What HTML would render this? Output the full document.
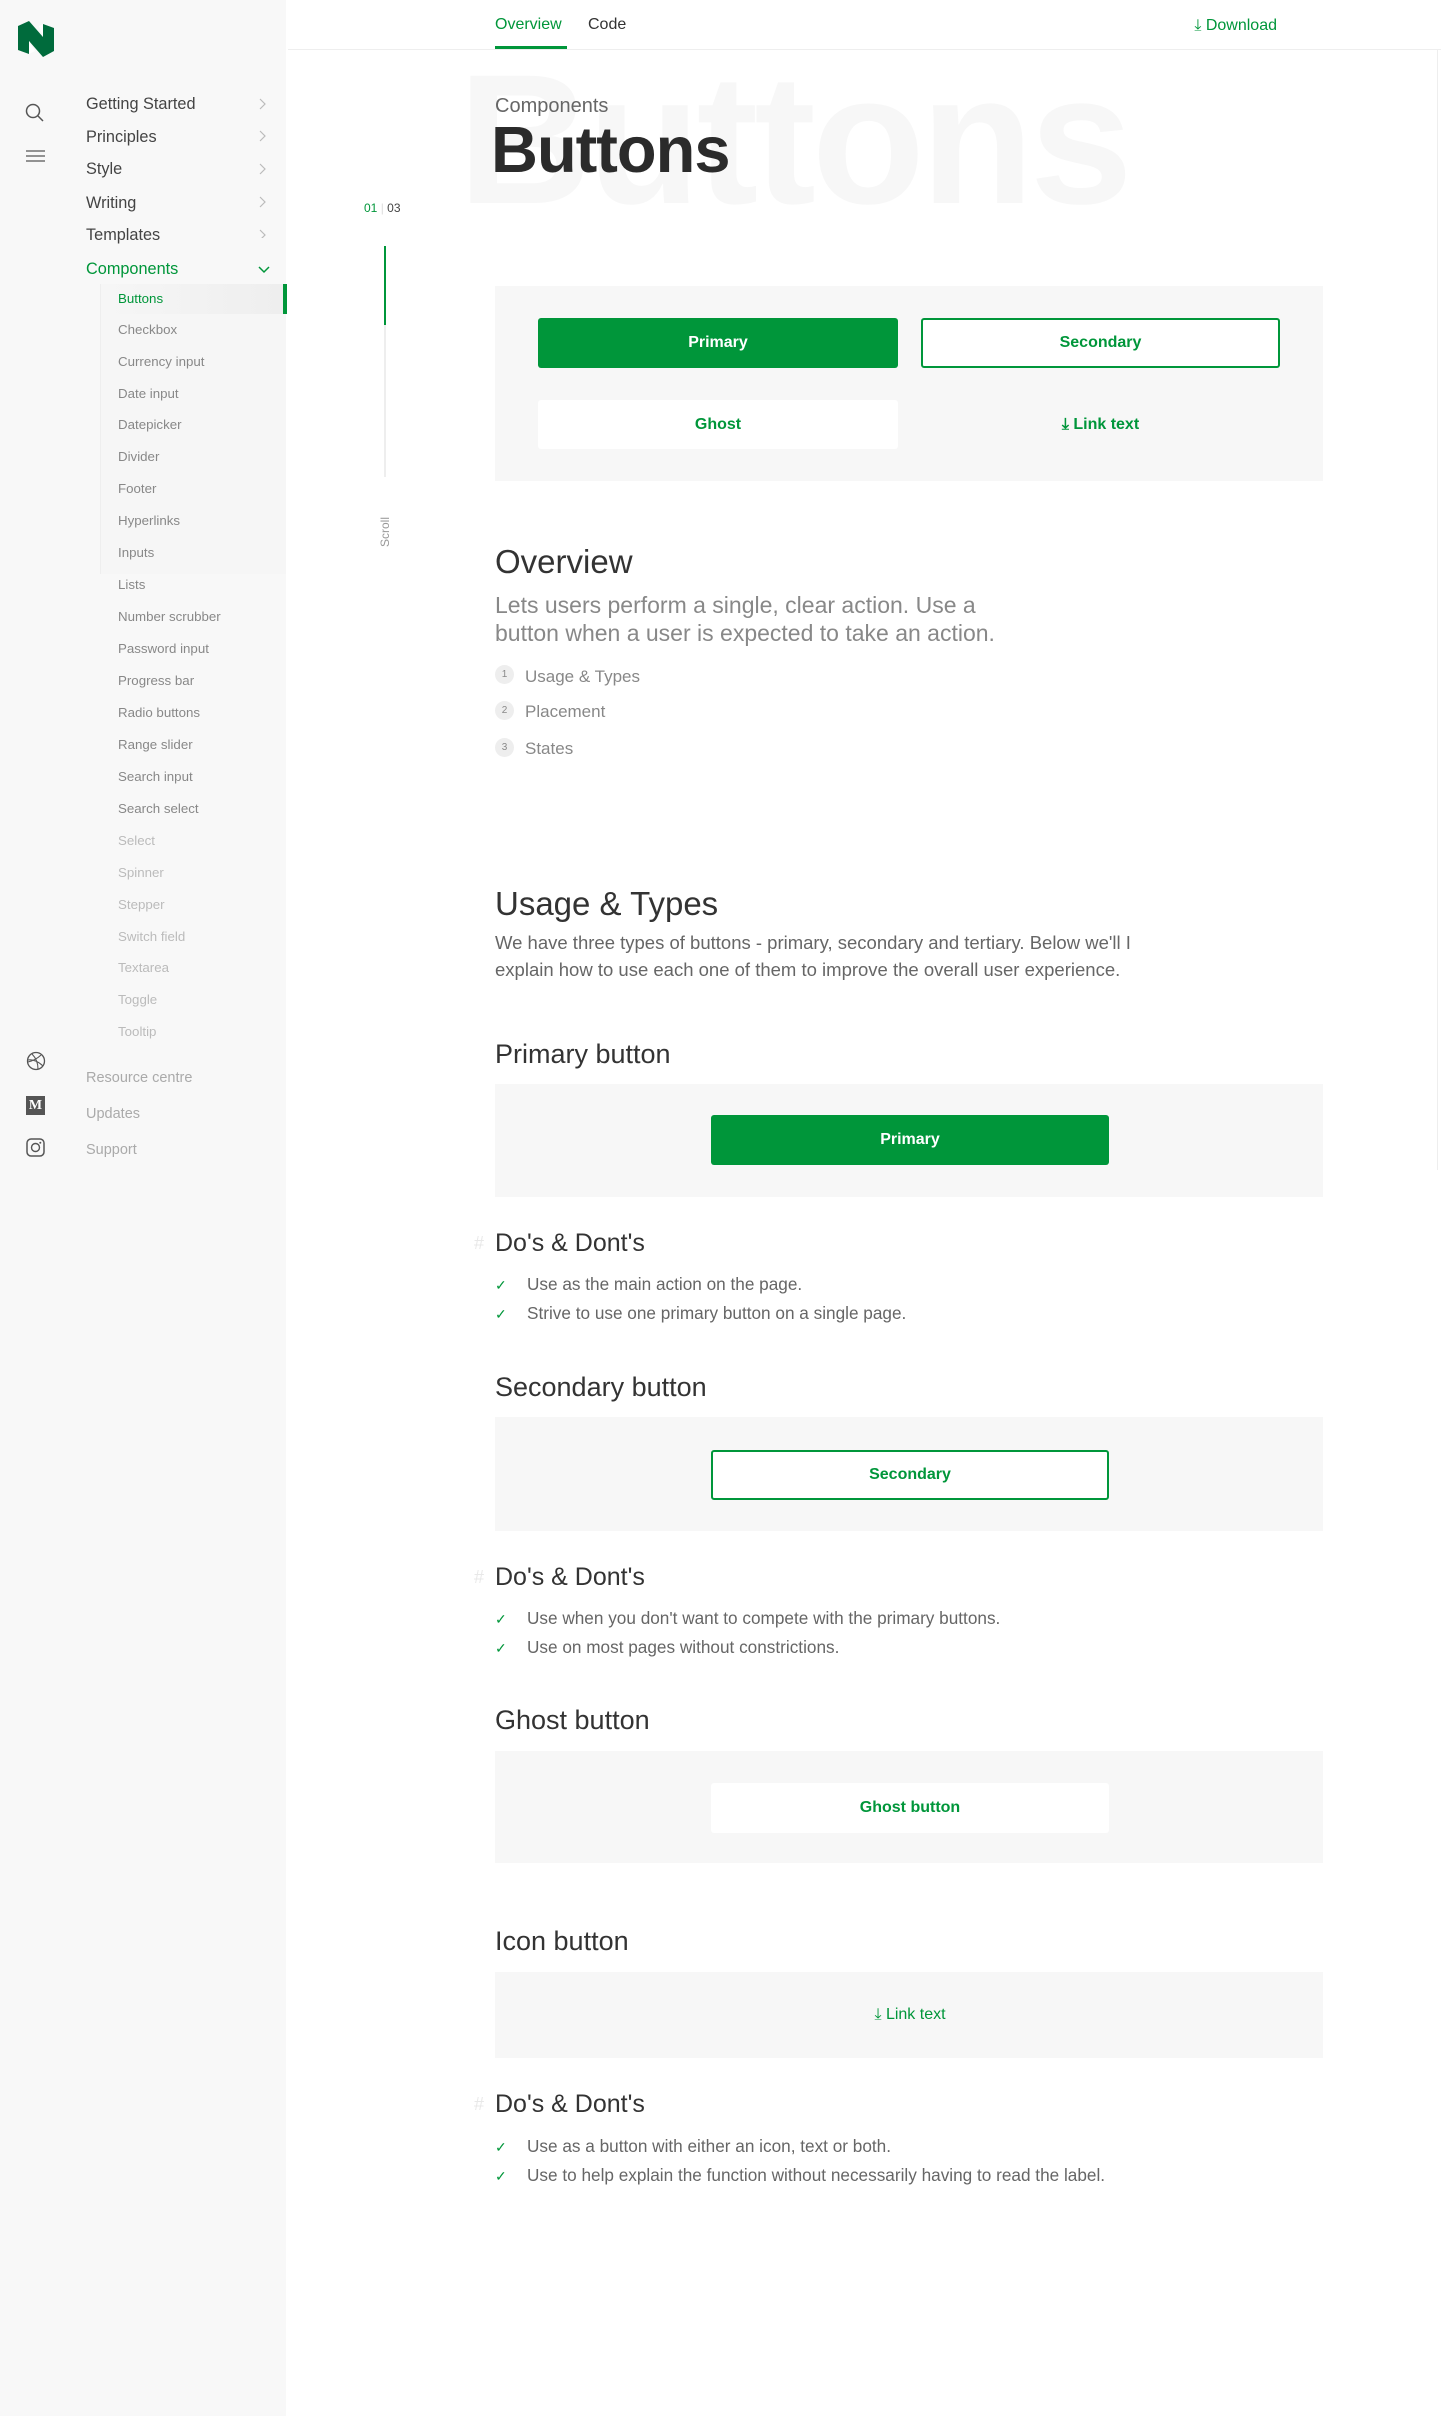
<!DOCTYPE html>
<html><head><meta charset="utf-8"><style>
*{margin:0;padding:0;box-sizing:border-box}
body{width:1441px;height:2416px;position:relative;background:#fff;font-family:"Liberation Sans",sans-serif;color:#333;overflow:hidden}
.a{position:absolute;white-space:nowrap}
.t{line-height:30px;height:30px}
.nav{left:86px;font-size:16.3px;color:#444}
.chev{left:258px;top:0}
.sub{left:118px;font-size:13.3px;color:#888}
.sub.l{color:#bbb}
.box{position:absolute;background:#f7f7f7}
.btn{position:absolute;display:flex;align-items:center;justify-content:center;font-size:16px;font-weight:bold;border-radius:3px}
.g{color:#00963a}
.h3{font-size:27px;color:#333}
.h4{font-size:25px;color:#333}
.hash{position:absolute;left:474px;color:#e8e8e8;font-size:18px}
.chk{font-size:17.2px;color:#666}
.chk span{color:#00963a;display:inline-block;width:32px;font-size:14px}
</style></head><body>
<!-- sidebar -->
<div class="box" style="left:0;top:0;width:286px;height:2416px;background:#f8f8f8"></div>
<div class="box" style="left:100px;top:284px;width:186px;height:290px;background:#f6f6f6;border-left:1px solid #eee"></div>
<svg class="a" style="left:17px;top:21px" width="38" height="36" viewBox="0 0 38 36"><path d="M1 5 L12 0 L26 16 L26 3 L37 7 L37 30 L26 36 L12 20 L12 33 L1 29Z" fill="#006b3c"/><path d="M12 20 L12 33 L18 30Z" fill="#fff"/><path d="M26 16 L26 3 L22 5Z" fill="#fff"/></svg>
<svg class="a" style="left:25px;top:103px" width="20" height="20" viewBox="0 0 20 20"><circle cx="8" cy="8" r="6.5" fill="none" stroke="#555" stroke-width="1.5"/><path d="M13 13L18 18" stroke="#555" stroke-width="1.5"/></svg>
<svg class="a" style="left:26px;top:150px" width="20" height="12"><path d="M0 1H19M0 6H19M0 11H19" stroke="#555" stroke-width="1.3"/></svg>
<div class="a t nav" style="top:89px">Getting Started</div>
<div class="a t nav" style="top:122px">Principles</div>
<div class="a t nav" style="top:154px">Style</div>
<div class="a t nav" style="top:188px">Writing</div>
<div class="a t nav" style="top:220px">Templates</div>
<svg class="a" style="left:259px;top:98px" width="8" height="140"><path d="M1 1L6 6L1 11M1 33L6 38L1 43M1 66L6 71L1 76M1 99L6 104L1 109M1 132L6 137L1 142" fill="none" stroke="#bbb" stroke-width="1.2"/></svg>
<div class="a t nav g" style="top:254px;color:#00963a">Components</div>
<svg class="a" style="left:258px;top:266px" width="12" height="8"><path d="M1 1L6 6L11 1" fill="none" stroke="#00963a" stroke-width="1.5"/></svg>
<div class="box" style="left:104px;top:284px;width:180px;height:30px;background:linear-gradient(90deg,#f6f6f6,#eeeeee)"></div>
<div class="box" style="left:283px;top:284px;width:4px;height:30px;background:#00963a"></div>
<div class="a t sub" style="top:284px;color:#00963a">Buttons</div>
<div class="a t sub" style="top:315px">Checkbox</div>
<div class="a t sub" style="top:347px">Currency input</div>
<div class="a t sub" style="top:379px">Date input</div>
<div class="a t sub" style="top:410px">Datepicker</div>
<div class="a t sub" style="top:442px">Divider</div>
<div class="a t sub" style="top:474px">Footer</div>
<div class="a t sub" style="top:506px">Hyperlinks</div>
<div class="a t sub" style="top:538px">Inputs</div>
<div class="a t sub" style="top:570px">Lists</div>
<div class="a t sub" style="top:602px">Number scrubber</div>
<div class="a t sub" style="top:634px">Password input</div>
<div class="a t sub" style="top:666px">Progress bar</div>
<div class="a t sub" style="top:698px">Radio buttons</div>
<div class="a t sub" style="top:730px">Range slider</div>
<div class="a t sub" style="top:762px">Search input</div>
<div class="a t sub" style="top:794px">Search select</div>
<div class="a t sub l" style="top:826px">Select</div>
<div class="a t sub l" style="top:858px">Spinner</div>
<div class="a t sub l" style="top:890px">Stepper</div>
<div class="a t sub l" style="top:922px">Switch field</div>
<div class="a t sub l" style="top:953px">Textarea</div>
<div class="a t sub l" style="top:985px">Toggle</div>
<div class="a t sub l" style="top:1017px">Tooltip</div>
<svg class="a" style="left:26px;top:1051px" width="20" height="20" viewBox="0 0 20 20"><circle cx="10" cy="10" r="8.5" fill="none" stroke="#555" stroke-width="1.3"/><path d="M2 9C7 8 13 11 17 15M6 3C10 7 12 12 12 18M15 4C11 8 6 10 2 11" fill="none" stroke="#555" stroke-width="1.1"/></svg>
<div class="a" style="left:26px;top:1096px;width:19px;height:19px;background:#555;color:#fff;font:bold 14px 'Liberation Serif',serif;text-align:center;line-height:19px">M</div>
<svg class="a" style="left:26px;top:1138px" width="19" height="19" viewBox="0 0 19 19"><rect x="1" y="1" width="17" height="17" rx="4" fill="none" stroke="#555" stroke-width="1.5"/><circle cx="9.5" cy="9.5" r="4" fill="none" stroke="#555" stroke-width="1.4"/><circle cx="14.3" cy="4.7" r="1" fill="#555"/></svg>
<div class="a t nav" style="top:1063px;color:#aaa;font-size:14.5px">Resource centre</div>
<div class="a t nav" style="top:1099px;color:#aaa;font-size:14.5px">Updates</div>
<div class="a t nav" style="top:1135px;color:#aaa;font-size:14.5px">Support</div>
<!-- header -->
<div class="box" style="left:288px;top:49px;width:1153px;height:1px;background:#eee"></div>
<div class="a t" style="left:495px;top:10px;font-size:16px;color:#00963a">Overview</div>
<div class="box" style="left:495px;top:46px;width:72px;height:3px;background:#00963a"></div>
<div class="a t" style="left:588px;top:10px;font-size:16px;color:#333">Code</div>
<div class="a t" style="right:164px;top:11px;font-size:16px;color:#00963a">⤓ Download</div>
<div class="box" style="left:1437px;top:50px;width:1px;height:1120px;background:#eee"></div>
<!-- hero -->
<div class="a" style="left:458px;top:40px;font-size:185px;font-weight:bold;color:#f7f7f7;line-height:200px;letter-spacing:-4px">Buttons</div>
<div class="a t" style="left:495px;top:91px;font-size:20px;color:#666">Components</div>
<div class="a" style="left:491px;top:112px;font-size:65px;font-weight:bold;color:#2b2b2b;line-height:76px;letter-spacing:-1px">Buttons</div>
<div class="a t" style="left:364px;top:193px;font-size:12px;color:#00963a">01 <span style="color:#ddd">|</span> <span style="color:#444">03</span></div>
<div class="box" style="left:384px;top:246px;width:2px;height:231px;background:#eee"></div>
<div class="box" style="left:384px;top:246px;width:2px;height:79px;background:#00963a"></div>
<div class="a" style="left:370px;top:525px;font-size:12px;color:#999;transform:rotate(-90deg)">Scroll</div>
<!-- demo -->
<div class="box" style="left:495px;top:286px;width:828px;height:195px"></div>
<div class="btn" style="left:538px;top:318px;width:360px;height:50px;background:#00963a;color:#fff">Primary</div>
<div class="btn g" style="left:921px;top:318px;width:359px;height:50px;background:#fff;border:2px solid #00963a">Secondary</div>
<div class="btn g" style="left:538px;top:400px;width:360px;height:49px;background:#fff">Ghost</div>
<div class="btn g" style="left:921px;top:400px;width:359px;height:49px">⤓ Link text</div>
<!-- overview -->
<div class="a" style="left:495px;top:540px;font-size:33px;line-height:44px;color:#333">Overview</div>
<div class="a" style="left:495px;top:591px;font-size:23px;color:#888;line-height:28px">Lets users perform a single, clear action. Use a<br>button when a user is expected to take an action.</div>
<div class="a" style="left:495px;top:665px;width:19px;height:19px;border-radius:50%;background:#eee;font-size:10px;color:#888;text-align:center;line-height:19px">1</div>
<div class="a" style="left:495px;top:701px;width:19px;height:19px;border-radius:50%;background:#eee;font-size:10px;color:#888;text-align:center;line-height:19px">2</div>
<div class="a" style="left:495px;top:738px;width:19px;height:19px;border-radius:50%;background:#eee;font-size:10px;color:#888;text-align:center;line-height:19px">3</div>
<div class="a t" style="left:525px;top:662px;font-size:17px;color:#888">Usage &amp; Types</div>
<div class="a t" style="left:525px;top:697px;font-size:17px;color:#888">Placement</div>
<div class="a t" style="left:525px;top:734px;font-size:17px;color:#888">States</div>
<!-- usage -->
<div class="a" style="left:495px;top:882px;font-size:33px;color:#333;line-height:44px">Usage &amp; Types</div>
<div class="a" style="left:495px;top:929px;font-size:18.5px;color:#666;line-height:27px">We have three types of buttons - primary, secondary and tertiary. Below we'll I<br>explain how to use each one of them to improve the overall user experience.</div>
<div class="a h3" style="left:495px;top:1036px;line-height:36px">Primary button</div>
<div class="box" style="left:495px;top:1084px;width:828px;height:113px"></div>
<div class="btn" style="left:711px;top:1115px;width:398px;height:50px;background:#00963a;color:#fff">Primary</div>
<div class="hash" style="top:1233px">#</div>
<div class="a h4" style="left:495px;top:1227px;line-height:32px">Do's &amp; Dont's</div>
<div class="a chk" style="left:495px;top:1274px;line-height:20px"><span>✓</span>Use as the main action on the page.</div>
<div class="a chk" style="left:495px;top:1303px;line-height:20px"><span>✓</span>Strive to use one primary button on a single page.</div>
<div class="a h3" style="left:495px;top:1369px;line-height:36px">Secondary button</div>
<div class="box" style="left:495px;top:1417px;width:828px;height:114px"></div>
<div class="btn g" style="left:711px;top:1450px;width:398px;height:50px;background:#fff;border:2px solid #00963a">Secondary</div>
<div class="hash" style="top:1567px">#</div>
<div class="a h4" style="left:495px;top:1561px;line-height:32px">Do's &amp; Dont's</div>
<div class="a chk" style="left:495px;top:1608px;line-height:20px"><span>✓</span>Use when you don't want to compete with the primary buttons.</div>
<div class="a chk" style="left:495px;top:1637px;line-height:20px"><span>✓</span>Use on most pages without constrictions.</div>
<div class="a h3" style="left:495px;top:1702px;line-height:36px">Ghost button</div>
<div class="box" style="left:495px;top:1751px;width:828px;height:112px"></div>
<div class="btn g" style="left:711px;top:1783px;width:398px;height:50px;background:#fff">Ghost button</div>
<div class="a h3" style="left:495px;top:1923px;line-height:36px">Icon button</div>
<div class="box" style="left:495px;top:1972px;width:828px;height:86px"></div>
<div class="btn g" style="left:711px;top:2002px;width:398px;height:26px;font-weight:normal">⤓ Link text</div>
<div class="hash" style="top:2094px">#</div>
<div class="a h4" style="left:495px;top:2088px;line-height:32px">Do's &amp; Dont's</div>
<div class="a chk" style="left:495px;top:2136px;line-height:20px"><span>✓</span>Use as a button with either an icon, text or both.</div>
<div class="a chk" style="left:495px;top:2165px;line-height:20px"><span>✓</span>Use to help explain the function without necessarily having to read the label.</div>
</body></html>
